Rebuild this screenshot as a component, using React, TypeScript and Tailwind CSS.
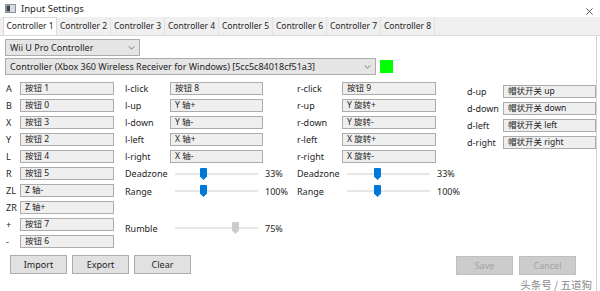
import React from "react";

const FONT = { fontFamily: '"Noto Sans", "Noto Sans CJK SC", sans-serif' };

const tabs = ["Controller 1", "Controller 2", "Controller 3", "Controller 4", "Controller 5", "Controller 6", "Controller 7", "Controller 8"];

const leftRows: [string, string][] = [
  ["A", "按钮 1"],
  ["B", "按钮 0"],
  ["X", "按钮 3"],
  ["Y", "按钮 2"],
  ["L", "按钮 4"],
  ["R", "按钮 5"],
  ["ZL", "Z 轴-"],
  ["ZR", "Z 轴+"],
  ["+", "按钮 7"],
  ["-", "按钮 6"],
];

const lRows: [string, string][] = [
  ["l-click", "按钮 8"],
  ["l-up", "Y 轴+"],
  ["l-down", "Y 轴-"],
  ["l-left", "X 轴+"],
  ["l-right", "X 轴-"],
];

const rRows: [string, string][] = [
  ["r-click", "按钮 9"],
  ["r-up", "Y 旋转+"],
  ["r-down", "Y 旋转-"],
  ["r-left", "X 旋转+"],
  ["r-right", "X 旋转-"],
];

const dRows: [string, string][] = [
  ["d-up", "帽状开关 up"],
  ["d-down", "帽状开关 down"],
  ["d-left", "帽状开关 left"],
  ["d-right", "帽状开关 right"],
];

function Box({ value, width }: { value: string; width: string }) {
  return (
    <div className={`flex h-[13px] items-center border border-[#acacac] bg-[#efefef] pl-[4px] text-[8.5px] leading-none text-[#222] ${width}`}>
      {value}
    </div>
  );
}

function Row({ label, value, labelW, boxW }: { label: string; value: string; labelW: string; boxW: string }) {
  return (
    <div className="flex h-[17px] items-center">
      <span className={`shrink-0 text-[9px] leading-none text-[#1e1e1e] ${labelW}`}>{label}</span>
      <Box value={value} width={boxW} />
    </div>
  );
}

function Slider({ label, pos, value, gray, h }: { label: string; pos: number; value: string; gray?: boolean; h: string }) {
  return (
    <div className={`flex items-center whitespace-nowrap ${h}`}>
      <span className="w-[50px] shrink-0 text-[9px] leading-none text-[#1e1e1e]">{label}</span>
      <div className="relative h-[12px] w-[83px] shrink-0">
        <div className="absolute left-0 right-0 top-[5px] h-[2px] bg-[#e7e7e7]" />
        <svg
          viewBox="0 0 7 12"
          className="absolute top-0 h-[12px] w-[7px]"
          style={{ left: `${pos - 3.5}px` }}
        >
          <path d="M0 1 Q0 0 1 0 H6 Q7 0 7 1 V8.5 L3.5 12 L0 8.5 Z" fill={gray ? "#cccccc" : "#0078d7"} />
        </svg>
      </div>
      <span className="ml-[7px] shrink-0 text-[9px] leading-none text-[#1e1e1e]">{value}</span>
    </div>
  );
}

function Button({ label, disabled }: { label: string; disabled?: boolean }) {
  return (
    <div
      className={`flex h-[19px] w-[57px] items-center justify-center border text-[9px] leading-none ${
        disabled ? "border-[#bfbfbf] bg-[#cccccc] text-[#a3a3a3]" : "border-[#adadad] bg-[#e1e1e1] text-[#1e1e1e]"
      }`}
    >
      {label}
    </div>
  );
}

function Chevron() {
  return (
    <svg viewBox="0 0 8 5" className="h-[4px] w-[7px]">
      <path d="M0.5 0.5 L4 4 L7.5 0.5" fill="none" stroke="#606060" strokeWidth={1} />
    </svg>
  );
}

export default function App() {
  return (
    <div className="relative h-[291px] w-[600px] overflow-hidden bg-white" style={FONT}>
      {/* title bar */}
      <div className="flex h-[17px] items-center">
        <svg viewBox="0 0 11 9" className="ml-[5px] h-[9px] w-[11px]">
          <rect x="0.5" y="0.5" width="10" height="8" fill="#d9dde3" stroke="#8a9099" />
          <rect x="1.5" y="1.5" width="3.5" height="6" fill="#3c4350" />
        </svg>
        <span className="ml-[5px] text-[9.5px] leading-none text-[#1e1e1e]">Input Settings</span>
        <svg viewBox="0 0 8 8" className="ml-auto mr-[7px] mt-[6px] h-[7px] w-[7px]">
          <path d="M0.5 0.5 L7.5 7.5 M7.5 0.5 L0.5 7.5" stroke="#333" strokeWidth={0.9} />
        </svg>
      </div>

      {/* tabs */}
      <div className="flex h-[19px] border-b border-[#dadada] bg-[#f0f0f0] pl-[3px]">
        {tabs.map((t, i) => (
          <div
            key={t}
            className={`flex w-[54px] items-center justify-center text-[8.5px] leading-none text-[#1e1e1e] ${
              i === 0 ? "border-x border-t border-[#d9d9d9] bg-white" : "border-r border-[#e2e2e2]"
            }`}
          >
            {t}
          </div>
        ))}
      </div>

      {/* panel */}
      <div className="mr-[3px] flex h-[255px] flex-col border-r border-[#d0d0d0] pl-[5px]">
        <div className="mt-[3px] flex h-[17px] w-[135px] items-center justify-between border border-[#acacac] bg-[#e5e5e5] pl-[4px] pr-[4px]">
          <span className="text-[9px] leading-none text-[#1e1e1e]">Wii U Pro Controller</span>
          <Chevron />
        </div>
        <div className="mt-[2px] flex items-center">
          <div className="flex h-[17px] w-[371px] items-center justify-between border border-[#acacac] bg-[#e5e5e5] pl-[4px] pr-[4px]">
            <span className="text-[9px] leading-none text-[#1e1e1e]">
              Controller (Xbox 360 Wireless Receiver for Windows) [5cc5c84018cf51a3]
            </span>
            <Chevron />
          </div>
          <div className="ml-[4px] h-[13px] w-[13px] bg-[#00ff00]" />
        </div>

        <div className="mt-[5px] flex">
          <div className="flex w-[109px] shrink-0 flex-col">
            {leftRows.map(([l, v]) => (
              <Row key={l} label={l} value={v} labelW="w-[15px] pl-[1px]" boxW="w-[94px]" />
            ))}
          </div>

          <div className="ml-[11px] flex w-[138px] shrink-0 flex-col">
            {lRows.map(([l, v]) => (
              <Row key={l} label={l} value={v} labelW="w-[45px]" boxW="w-[93px]" />
            ))}
            <Slider label="Deadzone" pos={28} value="33%" h="h-[17px]" />
            <Slider label="Range" pos={28} value="100%" h="h-[18px]" />
            <div className="h-[19px]" />
            <Slider label="Rumble" pos={60} value="75%" gray h="h-[18px]" />
          </div>

          <div className="ml-[34px] flex w-[139px] shrink-0 flex-col">
            {rRows.map(([l, v]) => (
              <Row key={l} label={l} value={v} labelW="w-[45px]" boxW="w-[94px]" />
            ))}
            <Slider label="Deadzone" pos={30} value="33%" h="h-[17px]" />
            <Slider label="Range" pos={30} value="100%" h="h-[18px]" />
          </div>

          <div className="ml-[31px] mt-[3px] flex w-[129px] shrink-0 flex-col">
            {dRows.map(([l, v]) => (
              <Row key={l} label={l} value={v} labelW="w-[36px]" boxW="w-[93px]" />
            ))}
          </div>
        </div>

        <div className="mt-[5px] flex pl-[5px] pr-[20px]">
          <div className="flex gap-[5px]">
            <Button label="Import" />
            <Button label="Export" />
            <Button label="Clear" />
          </div>
          <div className="ml-auto mt-[1px] flex gap-[6px]">
            <Button label="Save" disabled />
            <Button label="Cancel" disabled />
          </div>
        </div>
      </div>

      <span
        className="absolute bottom-[1px] right-[8px] text-[10.5px] leading-none text-[#8a8a8a]"
        style={{ fontFamily: '"Noto Sans CJK SC", sans-serif' }}
      >
        头条号 / 五道狗
      </span>
    </div>
  );
}
